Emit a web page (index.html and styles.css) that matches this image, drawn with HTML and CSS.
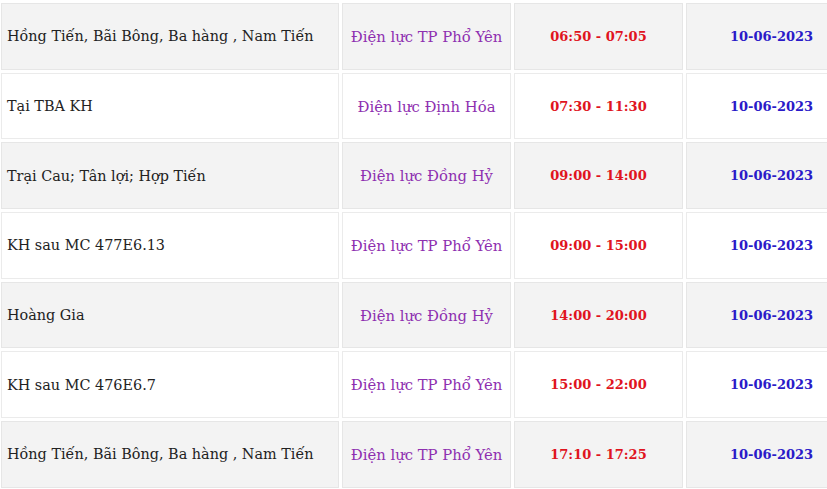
FILE: index.html
```html
<!DOCTYPE html>
<html lang="vi">
<head>
    <meta charset="UTF-8">
    <meta name="viewport" content="width=device-width, initial-scale=1.0">
    <title>Lịch cắt điện</title>
    <link rel="stylesheet" href="styles.css">
</head>
<body>
    <table class="schedule">
        <colgroup>
            <col class="col-area">
            <col class="col-unit">
            <col class="col-time">
            <col class="col-date">
        </colgroup>
        <tbody>
            <tr>
                <td class="area">Hồng Tiến, Bãi Bông, Ba hàng , Nam Tiến</td>
                <td class="unit">Điện lực TP Phổ Yên</td>
                <td class="time">06:50 - 07:05</td>
                <td class="date">10-06-2023</td>
            </tr>
            <tr>
                <td class="area">Tại TBA KH</td>
                <td class="unit">Điện lực Định Hóa</td>
                <td class="time">07:30 - 11:30</td>
                <td class="date">10-06-2023</td>
            </tr>
            <tr>
                <td class="area">Trại Cau; Tân lợi; Hợp Tiến</td>
                <td class="unit">Điện lực Đồng Hỷ</td>
                <td class="time">09:00 - 14:00</td>
                <td class="date">10-06-2023</td>
            </tr>
            <tr>
                <td class="area">KH sau MC 477E6.13</td>
                <td class="unit">Điện lực TP Phổ Yên</td>
                <td class="time">09:00 - 15:00</td>
                <td class="date">10-06-2023</td>
            </tr>
            <tr>
                <td class="area">Hoàng Gia</td>
                <td class="unit">Điện lực Đồng Hỷ</td>
                <td class="time">14:00 - 20:00</td>
                <td class="date">10-06-2023</td>
            </tr>
            <tr>
                <td class="area">KH sau MC 476E6.7</td>
                <td class="unit">Điện lực TP Phổ Yên</td>
                <td class="time">15:00 - 22:00</td>
                <td class="date">10-06-2023</td>
            </tr>
            <tr>
                <td class="area">Hồng Tiến, Bãi Bông, Ba hàng , Nam Tiến</td>
                <td class="unit">Điện lực TP Phổ Yên</td>
                <td class="time">17:10 - 17:25</td>
                <td class="date">10-06-2023</td>
            </tr>
        </tbody>
    </table>
</body>
</html>
```
FILE: styles.css
```css
body {
    margin: 0;
    font-family: "DejaVu Serif", "Liberation Serif", serif;
    color: #222;
    background: #fff;
    overflow: hidden;
}
.schedule {
    table-layout: fixed;
    width: 860px;
    border-collapse: separate;
    border-spacing: 3px;
    margin: 0 0 0 -2px;
}
.col-area { width: 338px; }
.col-unit { width: 169px; }
.col-time { width: 169px; }
.col-date { width: 170px; }
td {
    height: 66.7px;
    box-sizing: border-box;
    border: 1px solid #ebebeb;
    padding: 0 5px;
    text-align: center;
    vertical-align: middle;
    font-size: 14px;
    white-space: nowrap;
}
tr:nth-child(odd) td {
    background-color: #f3f3f3;
    border-color: #e6e6e6;
}
.area {
    text-align: left;
    font-size: 14.4px;
}
.unit {
    color: #8e2fb0;
    font-size: 14.8px;
}
.time {
    color: #e0141e;
    font-weight: bold;
    font-size: 13px;
}
.date {
    color: #2a1ac8;
    font-weight: bold;
    font-size: 13px;
    text-align: left;
    padding-left: 43px;
}
```
